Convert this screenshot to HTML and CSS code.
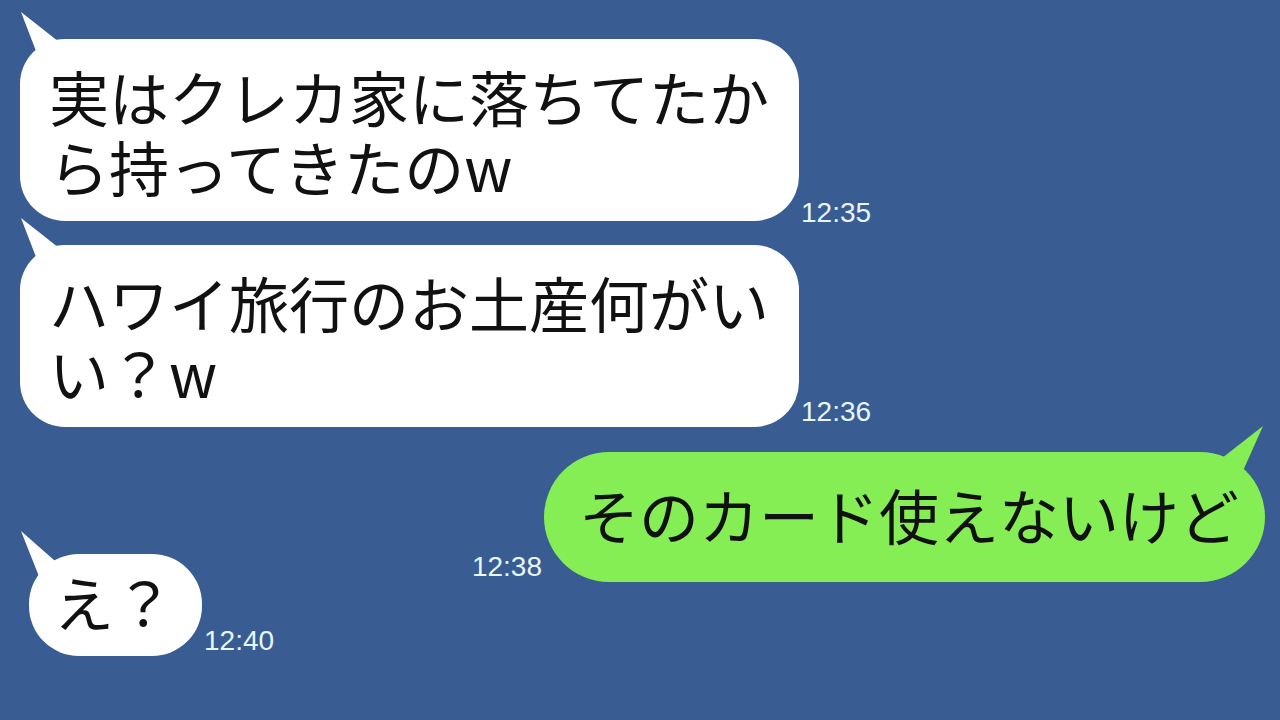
FILE: index.html
```html
<!DOCTYPE html>
<html lang="ja">

<head>
    <meta charset="UTF-8" />
    <meta name="viewport" content="width=device-width, initial-scale=1.0" />
    <title>トーク</title>
    <link rel="stylesheet" href="styles.css">
</head>

<body>
    <div class="chat">
        <div class="row">
            <p class="bubble in">実はクレカ家に落ちてたか<br>ら持ってきたのw</p>
            <span class="time low">12:35</span>
        </div>

        <div class="row">
            <p class="bubble in">ハワイ旅行のお土産何がい<br>い？w</p>
            <span class="time">12:36</span>
        </div>

        <div class="row mine">
            <span class="time">12:38</span>
            <p class="bubble out">そのカード使えないけど</p>
        </div>

        <div class="row short">
            <p class="bubble in small">え？</p>
            <span class="time">12:40</span>
        </div>
    </div>
</body>

</html>
```

FILE: styles.css
```css
* {
    margin: 0;
    padding: 0;
}

html,
body {
    height: 100%;
}

body {
    background: #395c93;
    font-family: "Noto Sans CJK JP", "Noto Sans", sans-serif;
    overflow: hidden;
}

.chat {
    display: flex;
    flex-direction: column;
    padding: 39px 15px 0 20px;
}

.row {
    display: flex;
    align-items: flex-end;
    gap: 2px;
    margin-bottom: 24px;
}

.row.mine {
    justify-content: flex-end;
    margin-top: 1px;
}

.row.short {
    margin-top: -52px;
    margin-left: 9px;
}

/* 吹き出し */
.bubble {
    position: relative;
    font-size: 60px;
    line-height: 70px;
    color: #111;
    padding: 22px 30px 20px 29px;
}

.bubble.in {
    background: #fff;
    border-radius: 45px;
}

.bubble.out {
    background: #86ee55;
    border-radius: 65px;
    padding: 27px 26px 33px 35px;
}

.bubble.small {
    border-radius: 50px;
    padding: 12px 28px 20px 25px;
}

/* しっぽ */
.bubble::before {
    content: "";
    position: absolute;
}

.bubble.in::before {
    left: 0;
    top: -27px;
    width: 50px;
    height: 55px;
    background: #fff;
    clip-path: polygon(1px 0, 48px 37px, 21px 52px);
}

.bubble.small::before {
    left: -8px;
    top: -23px;
    clip-path: polygon(0 0, 42px 37px, 21px 53px);
}

.bubble.out::before {
    right: 0;
    top: -26px;
    width: 50px;
    height: 60px;
    background: #86ee55;
    clip-path: polygon(48px 0, 2px 36px, 23px 56px);
}

.time {
    font-family: "Liberation Sans", Arial, sans-serif;
    font-size: 28px;
    line-height: 28px;
    color: #e8f6ff;
    margin-bottom: 1px;
}

.time.low {
    margin-bottom: -6px;
}
```
